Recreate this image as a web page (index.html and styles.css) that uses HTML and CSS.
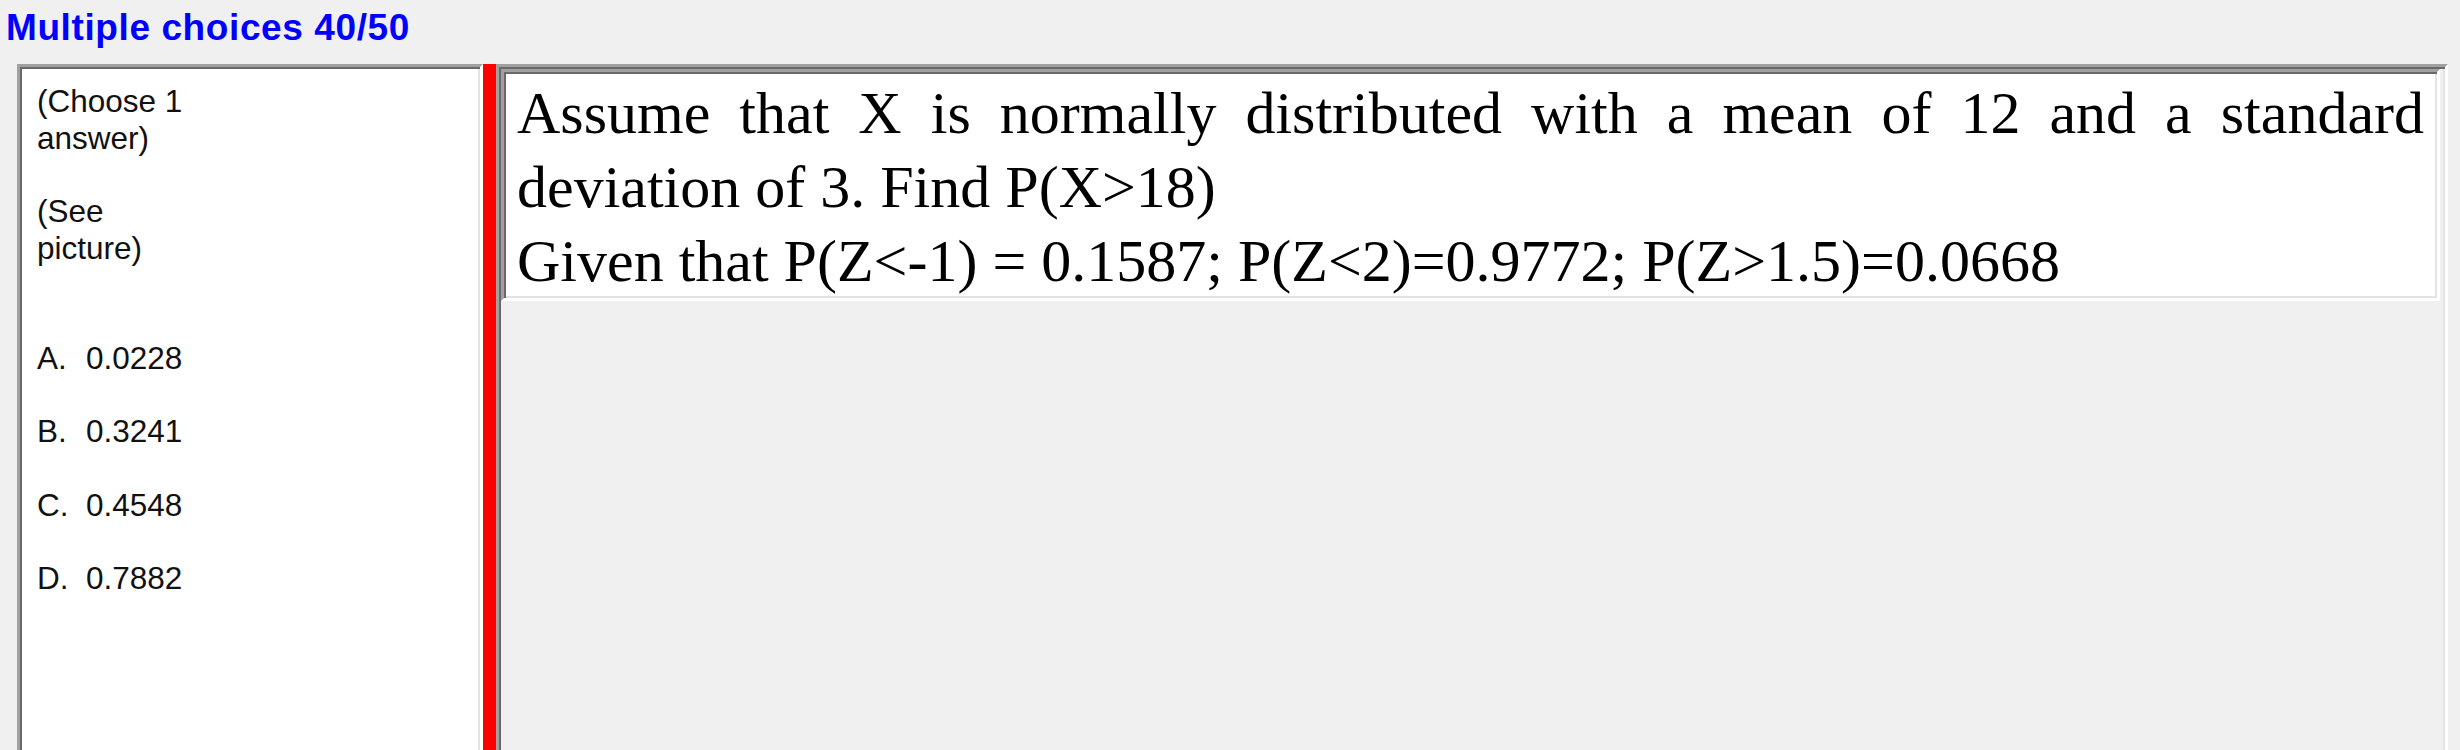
FILE: index.html
```html
<!DOCTYPE html>
<html lang="en">
<head>
<meta charset="utf-8">
<title>Multiple choices 40/50</title>
<link rel="stylesheet" href="styles.css">
</head>
<body>
<div class="title">Multiple choices 40/50</div>
<div class="main">
  <div class="choices">
    <p class="note">(Choose 1 answer)</p>
    <p class="note note-last">(See picture)</p>
    <div class="option"><span class="key">A.</span><span class="val">0.0228</span></div>
    <div class="option"><span class="key">B.</span><span class="val">0.3241</span></div>
    <div class="option"><span class="key">C.</span><span class="val">0.4548</span></div>
    <div class="option"><span class="key">D.</span><span class="val">0.7882</span></div>
  </div>
  <div class="divider"></div>
  <div class="question-panel">
    <div class="question-box">
      <p class="question">Assume that X is normally distributed with a mean of 12 and a standard deviation of 3. Find P(X&gt;18)</p>
      <p class="question">Given that P(Z&lt;-1) = 0.1587; P(Z&lt;2)=0.9772; P(Z&gt;1.5)=0.0668</p>
    </div>
  </div>
</div>
</body>
</html>
```

FILE: styles.css
```css
html, body {
  margin: 0;
  padding: 0;
}
body {
  width: 2460px;
  height: 750px;
  overflow: hidden;
  background: #f0f0f0;
  font-family: "Liberation Sans", Arial, sans-serif;
  color: #000;
}
.title {
  padding: 6px 0 0 6px;
  height: 44px;
  line-height: 44px;
  font-size: 37px;
  letter-spacing: 0.6px;
  font-weight: bold;
  color: #0000ff;
  white-space: nowrap;
}
.main {
  display: flex;
  margin: 14px 0 0 17px;
  height: 700px;
}
.choices {
  box-sizing: border-box;
  flex: 0 0 466px;
  background: #fff;
  border-style: solid;
  border-width: 3px;
  border-color: #a0a0a0 #ffffff #ffffff #a0a0a0;
  box-shadow: inset 2px 2px 0 #696969, inset -2px -2px 0 #e3e3e3;
  padding: 16px 15px 0 17px;
  font-size: 31.5px;
  line-height: 36.7px;
  color: #111;
}
.note {
  margin: 0 0 36.7px 0;
  width: 168px;
}
.note-last {
  margin-bottom: 73.4px;
}
.option {
  display: flex;
  margin-bottom: 36.7px;
  white-space: nowrap;
}
.key {
  flex: 0 0 49px;
}
.divider {
  flex: 0 0 13px;
  background: #ff0000;
}
.question-panel {
  box-sizing: border-box;
  flex: 0 0 1952px;
  border-style: solid;
  border-width: 3px;
  border-color: #a0a0a0 #ffffff #ffffff #a0a0a0;
  box-shadow: inset 2px 2px 0 #696969, inset -2px -2px 0 #e3e3e3;
  padding: 2px 3px 0 2px;
  background: #f0f0f0;
}
.question-box {
  box-sizing: border-box;
  width: 1939px;
  background: #fff;
  border-style: solid;
  border-width: 3px;
  border-color: #a0a0a0 #ffffff #ffffff #a0a0a0;
  box-shadow: inset 2px 2px 0 #696969, inset -2px -2px 0 #e3e3e3;
  padding: 4px 13px 0 13px;
  font-family: "Liberation Serif", "Times New Roman", serif;
  font-size: 60px;
  line-height: 74px;
  text-align: justify;
}
.question {
  margin: 0;
}
```
